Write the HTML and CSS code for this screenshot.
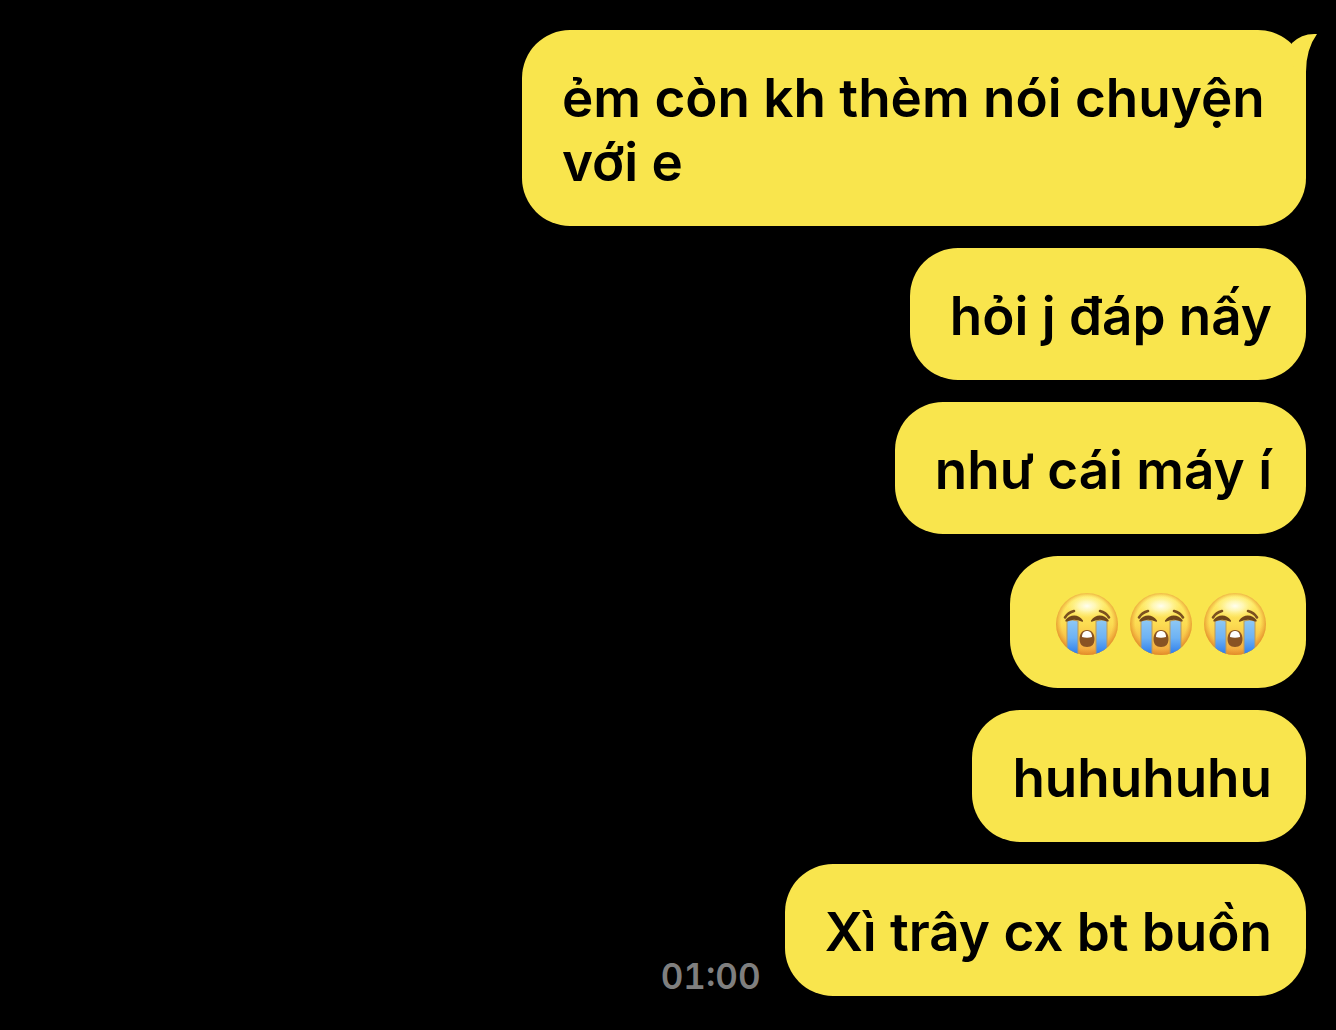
FILE: index.html
```
<!DOCTYPE html>
<html lang="vi">
<head>
  <meta charset="UTF-8">
  <meta name="viewport" content="width=device-width, initial-scale=1">
  <title>Chat</title>
  <link rel="stylesheet" href="styles.css">
</head>
<body>
  <!-- shared emoji drawing -->
  <svg class="defs" aria-hidden="true">
    <defs>
      <linearGradient id="face" x1="0" y1="0" x2="0" y2="1">
        <stop offset="0" stop-color="#fff06a"/>
        <stop offset="0.5" stop-color="#fcdc52"/>
        <stop offset="1" stop-color="#f2a43c"/>
      </linearGradient>
      <radialGradient id="edge" cx="0.5" cy="0.48" r="0.53">
        <stop offset="0.78" stop-color="#ec9a30" stop-opacity="0"/>
        <stop offset="1" stop-color="#dc8424" stop-opacity="0.95"/>
      </radialGradient>
      <radialGradient id="shine">
        <stop offset="0" stop-color="#fffef0"/>
        <stop offset="0.4" stop-color="#fffbc8" stop-opacity="0.8"/>
        <stop offset="1" stop-color="#fff48a" stop-opacity="0"/>
      </radialGradient>
      <linearGradient id="tear" x1="0" y1="0" x2="0" y2="1">
        <stop offset="0" stop-color="#8ec8f4"/>
        <stop offset="0.5" stop-color="#6db2f4"/>
        <stop offset="0.9" stop-color="#3483ec"/>
      </linearGradient>
      <clipPath id="round"><circle cx="32" cy="32" r="31"/></clipPath>
      <symbol id="sob" viewBox="0 0 64 64">
        <circle cx="32" cy="32" r="31" fill="url(#face)"/>
        <circle cx="32" cy="32" r="31" fill="url(#edge)"/>
        <ellipse cx="32" cy="14" rx="21" ry="12" fill="url(#shine)"/>
        <g clip-path="url(#round)">
          <path d="M12 29Q17 27 23 29V64H12Z" fill="url(#tear)" stroke="#b99a5c" stroke-width="1"/>
          <path d="M41 29Q47 27 52 29V64H41Z" fill="url(#tear)" stroke="#b99a5c" stroke-width="1"/>
        </g>
        <g fill="#70471a">
          <path d="M10.500 28C14 23 23 21 28 28.500Q28.500 30.500 26.500 29.500Q19 26 12 29.500Q9.500 30 10.500 28Z"/>
          <path d="M53.500 28C50 23 41 21 36 28.500Q35.500 30.500 37.500 29.500Q45 26 52 29.500Q54.500 30 53.500 28Z"/>
        </g>
        <g fill="none" stroke="#7c5120" stroke-width="2.600" stroke-linecap="round">
          <path d="M10 25.500Q13 20.500 19 19"/>
          <path d="M54 25.500Q51 20.500 45 19"/>
        </g>
        <path d="M32 38C37 38 39.500 42 39.500 47C39.500 52 37 55 32 55C27 55 24.500 52 24.500 47C24.500 42 27 38 32 38Z" fill="#885323"/>
        <path d="M27 45C27 41 29 39 32 39C35 39 37 41 37 45Q32 46.500 27 45Z" fill="#fff"/>
      </symbol>
    </defs>
  </svg>

  <main class="chat">
    <div class="message">
      <p class="bubble">ẻm còn kh thèm nói chuyện với e</p>
      <svg class="tail" viewBox="0 0 28 56" aria-hidden="true">
        <path d="M2 11Q12 1 27 2Q16 17 16 40V54L2 32Z"/>
      </svg>
    </div>
    <div class="message">
      <p class="bubble">hỏi j đáp nấy</p>
    </div>
    <div class="message">
      <p class="bubble">như cái máy í</p>
    </div>
    <div class="message">
      <div class="bubble emojis" role="img" aria-label="😭😭😭">
        <svg class="emoji"><use href="#sob"/></svg>
        <svg class="emoji"><use href="#sob"/></svg>
        <svg class="emoji"><use href="#sob"/></svg>
      </div>
    </div>
    <div class="message">
      <p class="bubble">huhuhuhu</p>
    </div>
    <div class="message">
      <time class="time" datetime="01:00">01:00</time>
      <p class="bubble">Xì trây cx bt buồn</p>
    </div>
  </main>
</body>
</html>
```
FILE: styles.css
```
* {
  box-sizing: border-box;
}
body {
  margin: 0;
  background: #000;
  font-family: Inter, "Liberation Sans", sans-serif;
}
.defs {
  position: absolute;
  width: 0;
  height: 0;
}
.chat {
  display: flex;
  flex-direction: column;
  gap: 22px;
  padding: 30px 30px 34px;
}
.message {
  position: relative;
  display: flex;
  justify-content: flex-end;
  align-items: flex-end;
  gap: 24px;
}
.bubble {
  max-width: 784px;
  margin: 0;
  padding: 36px 34px 32px 40px;
  border-radius: 48px;
  background: #f9e54d;
  color: #000;
  font-size: 53px;
  font-weight: 560;
  line-height: 64px;
}
.tail {
  position: absolute;
  top: 2px;
  right: -12px;
  width: 28px;
  height: 56px;
  fill: #f9e54d;
}
.emojis {
  display: flex;
}
.emoji {
  width: 74px;
  height: 64px;
}
.time {
  color: #7f7f7f;
  font-size: 35px;
  font-weight: 560;
  font-variant-numeric: tabular-nums;
  line-height: 40px;
}
```
